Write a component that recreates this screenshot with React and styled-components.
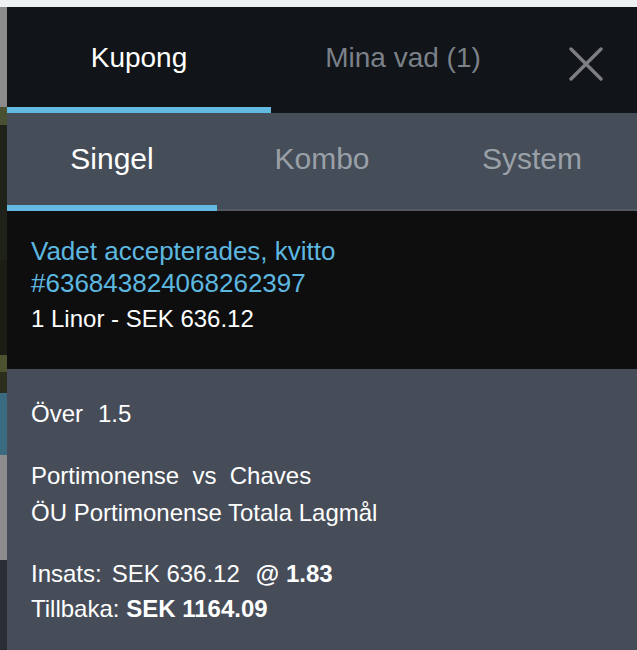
import React, { useState } from 'react';
import styled, { createGlobalStyle } from 'styled-components';

const GlobalStyle = createGlobalStyle`
	html, body {
		margin: 0;
		padding: 0;
		background: #edf1f2;
	}
	body {
		font-family: 'Liberation Sans', Arial, Helvetica, sans-serif;
		-webkit-font-smoothing: antialiased;
	}
`;

const Page = styled.div`
	display: flex;
	flex-direction: column;
	width: 637px;
	height: 650px;
	overflow: hidden;
`;

const TopStrip = styled.div`
	height: 7px;
	background: #edf1f2;
	flex-shrink: 0;
`;

const Body = styled.div`
	flex: 1;
	display: flex;
	min-height: 0;
`;

const BackStrip = styled.div`
	width: 7px;
	display: flex;
	flex-direction: column;
	flex-shrink: 0;
`;

const Band = styled.div`
	height: ${({ h }) => h}px;
	background: ${({ color }) => color};
	flex-shrink: 0;
`;

const Panel = styled.div`
	flex: 1;
	display: flex;
	flex-direction: column;
	background: #464d59;
`;

const Header = styled.div`
	display: grid;
	grid-template-columns: 264px 264px 1fr;
	height: 106px;
	background: #111418;
`;

const HeaderTab = styled.div`
	display: flex;
	align-items: center;
	justify-content: center;
	font-size: 28px;
	padding-top: 2px;
	color: ${({ active }) => (active ? '#ffffff' : '#7b8189')};
	border-bottom: 6px solid ${({ active }) => (active ? '#63b9e1' : 'transparent')};
	cursor: pointer;
`;

const CloseButton = styled.button`
	display: flex;
	align-items: center;
	justify-content: center;
	background: none;
	border: 0;
	padding: 7px 0 0 0;
	cursor: pointer;
`;

const Tabs = styled.div`
	display: grid;
	grid-template-columns: repeat(3, 1fr);
	height: 98px;
	background: #454d58;
	box-shadow: inset 0 -2px 0 #525962;
`;

const Tab = styled.div`
	display: flex;
	align-items: center;
	justify-content: center;
	font-size: 30px;
	color: ${({ active }) => (active ? '#ffffff' : '#9aa0a8')};
	border-bottom: 6px solid ${({ active }) => (active ? '#63b9e1' : 'transparent')};
	cursor: pointer;
`;

const Receipt = styled.div`
	height: 158px;
	background: #0e0e0f;
	padding: 24px 24px 0 24px;
	box-sizing: border-box;
`;

const ReceiptTitle = styled.div`
	color: #5db8e0;
	font-size: 26px;
	line-height: 32px;
`;

const ReceiptInfo = styled.div`
	color: #ffffff;
	font-size: 24px;
	line-height: 32px;
	margin-top: 4px;
`;

const Details = styled.div`
	flex: 1;
	padding: 26px 24px 0 24px;
	color: #ffffff;
	font-size: 24px;
	line-height: 37px;
`;

const Group = styled.div`
	margin-bottom: 25px;
`;

const Line = styled.div`
	line-height: ${({ lh }) => lh || 37}px;
`;

const Gap = styled.span`
	display: inline-block;
	width: ${({ w }) => w}px;
`;

const Strong = styled.b`
	font-weight: 700;
`;

const CloseIcon = () => (
	<svg width="34" height="34" viewBox="0 0 34 34">
		<path d="M2 2 L32 32 M32 2 L2 32" stroke="#7c7e83" strokeWidth="3.4" strokeLinecap="round" />
	</svg>
);

const bands = [
	['#8b8b8b', 100],
	['#4a5032', 18],
	['#1f2218', 135],
	['#1b1d15', 95],
	['#4c5230', 17],
	['#2b2e1c', 21],
	['#3b6b80', 62],
	['#8d8d8d', 105],
	['#2a2d34', 100],
];

export default function App() {
	const [view, setView] = useState('kupong');
	const [mode, setMode] = useState('singel');

	return (
		<>
			<GlobalStyle />
			<Page>
				<TopStrip />
				<Body>
					<BackStrip>
						{bands.map(([color, h], i) => (
							<Band key={i} color={color} h={h} />
						))}
					</BackStrip>
					<Panel>
						<Header>
							<HeaderTab active={view === 'kupong'} onClick={() => setView('kupong')}>
								Kupong
							</HeaderTab>
							<HeaderTab active={view === 'vad'} onClick={() => setView('vad')}>
								Mina vad (1)
							</HeaderTab>
							<CloseButton aria-label="Stäng">
								<CloseIcon />
							</CloseButton>
						</Header>
						<Tabs>
							<Tab active={mode === 'singel'} onClick={() => setMode('singel')}>Singel</Tab>
							<Tab active={mode === 'kombo'} onClick={() => setMode('kombo')}>Kombo</Tab>
							<Tab active={mode === 'system'} onClick={() => setMode('system')}>System</Tab>
						</Tabs>
						<Receipt>
							<ReceiptTitle>
								Vadet accepterades, kvitto
								<br />
								#636843824068262397
							</ReceiptTitle>
							<ReceiptInfo>1 Linor - SEK 636.12</ReceiptInfo>
						</Receipt>
						<Details>
							<Group>Över<Gap w={15} />1.5</Group>
							<Group>
								<div>Portimonense&nbsp; vs&nbsp; Chaves</div>
								<div>ÖU Portimonense Totala Lagmål</div>
							</Group>
							<Line lh={35}>
								Insats:<Gap w={10} />SEK 636.12<Gap w={16} /><Strong>@ 1.83</Strong>
							</Line>
							<Line lh={35}>
								Tillbaka: <Strong>SEK 1164.09</Strong>
							</Line>
						</Details>
					</Panel>
				</Body>
			</Page>
		</>
	);
}
